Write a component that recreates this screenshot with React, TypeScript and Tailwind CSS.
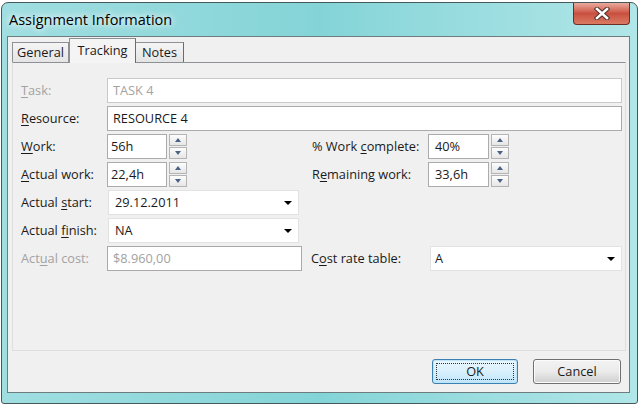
import React from "react";

const font = "font-['Segoe_UI','Open_Sans','Noto_Sans',sans-serif]";

function U({ children }: { children: React.ReactNode }) {
  return <span className="underline underline-offset-[2px] decoration-[1px]">{children}</span>;
}

function Spin() {
  return (
    <div className="flex flex-col gap-[1px] w-[18px] h-[25px]">
      <div className="flex-1 flex items-center justify-center border border-[#b4b4b4] bg-gradient-to-b from-[#fdfdfd] to-[#e6e6e6]">
        <svg width="6" height="4" viewBox="0 0 6 4">
          <path d="M3 0 L6 4 L0 4 Z" fill="#4a6286" />
        </svg>
      </div>
      <div className="flex-1 flex items-center justify-center border border-[#b4b4b4] bg-gradient-to-b from-[#fdfdfd] to-[#e6e6e6]">
        <svg width="6" height="4" viewBox="0 0 6 4">
          <path d="M0 0 L6 0 L3 4 Z" fill="#4a6286" />
        </svg>
      </div>
    </div>
  );
}

function Arrow() {
  return (
    <svg width="8" height="4" viewBox="0 0 8 4" className="shrink-0">
      <path d="M0 0 L8 0 L4 4 Z" fill="#000" />
    </svg>
  );
}

export default function App() {
  return (
    <div className={`w-[644px] h-[406px] bg-white overflow-hidden pt-[2px] pl-[1px] ${font}`}>
      {/* window frame */}
      <div className="w-[637px] h-[402px] flex flex-col rounded-t-[7px] rounded-b-[3px] border border-[#46585a] bg-gradient-to-r from-[#a0dee1] via-[#84d4d7] to-[#b0e6e8]">
        {/* title bar */}
        <div className="h-[33px] flex items-start justify-between">
          <div className="pl-[7px] pt-[8px] text-[14.5px] leading-[18px] text-black [text-shadow:0_0_6px_#ffffff,0_0_10px_#ffffff]">
            Assignment Information
          </div>
          <div className="mr-[7px] w-[57px] h-[22px] rounded-b-[4px] border border-t-0 border-[#6b2f28] bg-gradient-to-b from-[#e9aa9e] via-[#c9503f] to-[#d97a63] flex items-center justify-center">
            <svg width="16" height="13" viewBox="0 0 16 13">
              <path d="M3 2 L13 11 M13 2 L3 11" stroke="#4a2a26" strokeWidth="4.4" strokeLinecap="square" />
              <path d="M3 2 L13 11 M13 2 L3 11" stroke="#ffffff" strokeWidth="2.6" strokeLinecap="square" />
            </svg>
          </div>
        </div>

        {/* client area */}
        <div className="ml-[5px] w-[623px] h-[357px] border border-[#6d7d7f] bg-[#f0f0f0] flex flex-col text-[12.75px] text-[#1a1a1a]">
          {/* tabs */}
          <div className="h-[25px] mt-[1px] ml-[4px] flex items-end">
            <div className="w-[57px] h-[20px] mb-[1px] border border-b-0 border-[#8d9094] bg-gradient-to-b from-[#f5f5f5] to-[#e4e4e4] flex items-center justify-center">
              General
            </div>
            <div className="relative z-10 w-[67px] h-[25px] border border-b-0 border-[#8d9094] border-r-[#6a6d70] bg-[#f4f4f4] flex items-start justify-center pt-[2px]">
              Tracking
            </div>
            <div className="w-[48px] h-[20px] mb-[1px] border border-b-0 border-l-0 border-[#8d9094] border-r-[#6a6d70] bg-gradient-to-b from-[#f5f5f5] to-[#e4e4e4] flex items-center justify-center">
              Notes
            </div>
          </div>

          {/* tab panel */}
          <div className="-mt-[1px] ml-[4px] w-[614px] h-[289px] border border-[#dcdee0] border-t-[#8d9094] bg-[#f0f0f0] pt-[15px] pl-[8px] flex flex-col gap-[3px]">
            <div className="flex items-center h-[25px]">
              <div className="w-[86px] text-[#a2a2a2]">
                <U>T</U>ask:
              </div>
              <div className="w-[515px] h-[25px] border border-[#c9c9c9] bg-white text-[#a2a2a2] flex items-center pl-[5px]">
                TASK 4
              </div>
            </div>
            <div className="flex items-center h-[25px]">
              <div className="w-[86px]">
                <U>R</U>esource:
              </div>
              <div className="w-[515px] h-[25px] border border-[#ababab] bg-white flex items-center pl-[5px]">
                RESOURCE 4
              </div>
            </div>
            <div className="flex items-center h-[25px]">
              <div className="w-[86px]">
                <U>W</U>ork:
              </div>
              <div className="w-[60px] h-[25px] border border-[#ababab] bg-white flex items-center pl-[3px]">56h</div>
              <div className="ml-[2px]">
                <Spin />
              </div>
              <div className="ml-[125px] w-[116px]">
                % Work <U>c</U>omplete:
              </div>
              <div className="w-[61px] h-[25px] border border-[#ababab] bg-white flex items-center pl-[6px]">40%</div>
              <div className="ml-[2px]">
                <Spin />
              </div>
            </div>
            <div className="flex items-center h-[25px]">
              <div className="w-[86px]">
                <U>A</U>ctual work:
              </div>
              <div className="w-[60px] h-[25px] border border-[#ababab] bg-white flex items-center pl-[3px]">22,4h</div>
              <div className="ml-[2px]">
                <Spin />
              </div>
              <div className="ml-[125px] w-[116px]">
                R<U>e</U>maining work:
              </div>
              <div className="w-[61px] h-[25px] border border-[#ababab] bg-white flex items-center pl-[6px]">33,6h</div>
              <div className="ml-[2px]">
                <Spin />
              </div>
            </div>
            <div className="flex items-center h-[25px]">
              <div className="w-[86px]">
                Actual <U>s</U>tart:
              </div>
              <div className="ml-[1px] w-[191px] h-[25px] border border-[#e2e2e2] bg-white flex items-center justify-between pl-[6px] pr-[6px]">
                <span>29.12.2011</span>
                <Arrow />
              </div>
            </div>
            <div className="flex items-center h-[25px]">
              <div className="w-[86px]">
                Actual <U>f</U>inish:
              </div>
              <div className="ml-[1px] w-[191px] h-[25px] border border-[#e2e2e2] bg-white flex items-center justify-between pl-[6px] pr-[6px]">
                <span>NA</span>
                <Arrow />
              </div>
            </div>
            <div className="flex items-center h-[25px]">
              <div className="w-[86px] text-[#a2a2a2]">
                Act<U>u</U>al cost:
              </div>
              <div className="w-[195px] h-[25px] border border-[#a9a9a9] bg-white text-[#a2a2a2] flex items-center pl-[5px]">
                $8.960,00
              </div>
              <div className="ml-[9px] w-[119px]">
                C<U>o</U>st rate table:
              </div>
              <div className="w-[192px] h-[25px] border border-[#e2e2e2] bg-white flex items-center justify-between pl-[4px] pr-[6px]">
                <span>A</span>
                <Arrow />
              </div>
            </div>
          </div>

          {/* buttons */}
          <div className="mt-[8px] flex justify-end gap-[15px] pr-[8px]">
            <div className="relative w-[86px] h-[25px] rounded-[3px] border border-[#3c7fb1] bg-gradient-to-b from-[#eaf6fd] via-[#d9f0fc] to-[#bee6fd] flex items-center justify-center shadow-[inset_0_0_0_1px_#bfe4f8]">
              <div className="absolute inset-[3px] border border-dotted border-[#333]" />
              OK
            </div>
            <div className="w-[88px] h-[25px] rounded-[3px] border border-[#707070] bg-gradient-to-b from-[#f2f2f2] via-[#ebebeb] to-[#cfcfcf] flex items-center justify-center shadow-[inset_0_0_0_1px_#fcfcfc]">
              Cancel
            </div>
          </div>
        </div>
      </div>
    </div>
  );
}
